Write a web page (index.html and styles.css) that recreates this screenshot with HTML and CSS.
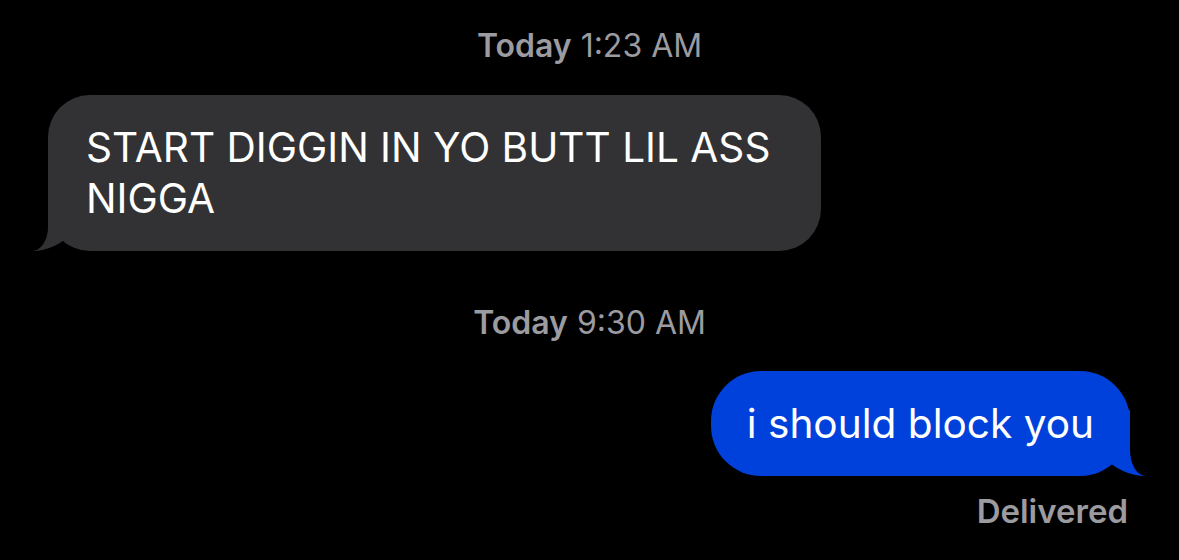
FILE: index.html
```html
<!DOCTYPE html>
<html>
<head>
  <meta charset="utf-8">
  <title>Messages</title>
  <link rel="stylesheet" href="styles.css">
</head>
<body>
  <div class="thread">
    <div class="stamp"><b>Today</b> 1:23 AM</div>

    <div class="row row-in">
      <div class="bubble bubble-in">START DIGGIN IN YO BUTT LIL ASS NIGGA</div>
    </div>

    <div class="stamp stamp-late"><b>Today</b> 9:30 AM</div>

    <div class="row row-out">
      <div class="bubble bubble-out">i should block you</div>
    </div>

    <div class="status">Delivered</div>
  </div>
</body>
</html>
```

FILE: styles.css
```css
html,
body,
div {
  margin: 0;
  padding: 0;
  border: 0;
}

html {
  height: 100%;
  background: #000;
}

body {
  font-family: 'Inter', 'Noto Sans', sans-serif;
  width: 100%;
  height: 100%;
  background: #000;
  color: #fff;
  -webkit-font-smoothing: antialiased;
}

.thread {
  display: flex;
  flex-direction: column;
  padding-top: 27px;
}

/* timestamps */
.stamp {
  text-align: center;
  font-size: 32px;
  line-height: 38px;
  color: #9b9ba0;
  font-weight: 400;
}
.stamp b {
  font-weight: 600;
}
.stamp-late {
  margin-top: 53px;
}

/* rows */
.row {
  display: flex;
}
.row-in {
  margin-top: 30px;
  padding-left: 48px;
}
.row-out {
  margin-top: 29px;
  justify-content: flex-end;
  padding-right: 49px;
}

/* bubbles */
.bubble {
  position: relative;
  z-index: 0;
  font-size: 40.6px;
  line-height: 51px;
  padding: 27px 38px;
  border-radius: 42px;
}
.bubble::before,
.bubble::after {
  content: "";
  position: absolute;
  bottom: 0;
  z-index: -1;
}

.bubble-in {
  width: 697px;
  background: #323234;
}
.bubble-in::before {
  left: -16px;
  width: 58px;
  height: 66px;
  background: #323234;
  border-bottom-right-radius: 58px 66px;
}
.bubble-in::after {
  left: -46px;
  width: 46px;
  height: 66px;
  background: #000;
  border-bottom-right-radius: 16px 24px;
}

.bubble-out {
  padding: 27px 36px;
  background: #0041dc;
  border-radius: 50px;
}
.bubble-out::before {
  right: -16px;
  width: 60px;
  height: 66px;
  background: #0041dc;
  border-bottom-left-radius: 60px 66px;
}
.bubble-out::after {
  right: -46px;
  width: 46px;
  height: 66px;
  background: #000;
  border-bottom-left-radius: 16px 26px;
}

/* delivery status */
.status {
  margin-top: 15px;
  padding-right: 51px;
  text-align: right;
  font-size: 33px;
  line-height: 40px;
  font-weight: 600;
  color: #9b9ba0;
}
```
